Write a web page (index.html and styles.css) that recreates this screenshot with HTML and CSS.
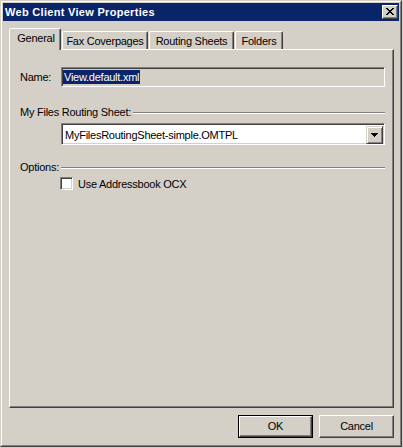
FILE: index.html
```html
<!DOCTYPE html>
<html>
<head>
<meta charset="utf-8">
<link rel="stylesheet" href="styles.css">
</head>
<body>
<div class="window">
  <div class="frame">
    <div class="titlebar">
      <span class="title">Web Client View Properties</span>
      <span class="close">
        <svg width="8" height="7" viewBox="0 0 8 7" shape-rendering="crispEdges"><path d="M0 0h2v1H0zM6 0h2v1H6zM1 1h2v1H1zM5 1h2v1H5zM2 2h4v1H2zM3 3h2v1H3zM2 4h4v1H2zM1 5h2v1H1zM5 5h2v1H5zM0 6h2v1H0zM6 6h2v1H6z" fill="#000"/></svg>
      </span>
    </div>
    <div class="body">
      <div class="tabs">
        <div class="tab active w-general">General</div>
        <div class="tab w-fax">Fax Coverpages</div>
        <div class="tab w-routing">Routing Sheets</div>
        <div class="tab w-folders">Folders</div>
      </div>
      <div class="panel">
        <div class="name-row">
          <span class="label">Name:</span>
          <div class="input"><span class="sel">View.default.xml</span></div>
        </div>
        <div class="group g1"><span class="glabel">My Files Routing Sheet:</span><span class="line"></span></div>
        <div class="combo">
          <span class="val">MyFilesRoutingSheet-simple.OMTPL</span>
          <span class="dd"><svg width="7" height="4" viewBox="0 0 7 4" shape-rendering="crispEdges"><path d="M0 0h7v1H0zM1 1h5v1H1zM2 2h3v1H2zM3 3h1v1H3z" fill="#000"/></svg></span>
        </div>
        <div class="group g2"><span class="glabel">Options:</span><span class="line"></span></div>
        <div class="check"><span class="box"></span><span class="clabel">Use Addressbook OCX</span></div>
      </div>
      <div class="buttons">
        <div class="btn default"><span class="btn-in">OK</span></div>
        <div class="btn"><span class="btn-in">Cancel</span></div>
      </div>
    </div>
  </div>
</div>
</body>
</html>
```
FILE: styles.css
```css
* { box-sizing: border-box; }
html, body { margin: 0; padding: 0; }
body {
  background: #d4d0c8;
  font-family: "Liberation Sans", Arial, sans-serif;
  font-size: 11px;
  letter-spacing: -0.25px;
  color: #000;
  width: 403px;
  height: 448px;
  overflow: hidden;
}
.window {
  width: 402px;
  height: 447px;
  border: 1px solid;
  border-color: #d4d0c8 #404040 #404040 #d4d0c8;
  background: #d4d0c8;
}
.frame {
  height: 100%;
  border: 1px solid;
  border-color: #ffffff #808080 #808080 #ffffff;
  padding: 1px;
  display: flex;
  flex-direction: column;
}
.titlebar {
  height: 18px;
  background: #0a246a;
  color: #fff;
  display: flex;
  align-items: center;
  justify-content: space-between;
  padding: 0 1px 0 2px;
}
.title {
  font-weight: bold;
  font-size: 11px;
  letter-spacing: 0.3px;
}
.close {
  width: 16px;
  height: 14px;
  background: #d4d0c8;
  border: 1px solid;
  border-color: #ffffff #404040 #404040 #ffffff;
  box-shadow: inset -1px -1px 0 #808080;
  display: flex;
  align-items: center;
  justify-content: center;
  padding: 0 1px 1px 0;
}
.close svg { display: block; }
.body {
  flex: 1;
  padding: 7px 5px 0 6px;
  display: flex;
  flex-direction: column;
}
.tabs {
  height: 21px;
  display: flex;
  align-items: flex-end;
  position: relative;
  z-index: 2;
}
.tab {
  height: 18px;
  border-top: 1px solid #fff;
  border-left: 1px solid #fff;
  border-right: 1px solid #404040;
  box-shadow: inset -1px 0 0 #808080;
  border-radius: 2px 2px 0 0;
  margin-left: 1px;
  text-align: center;
  line-height: 16px;
  padding-top: 1px;
  background: #d4d0c8;
}
.tab.active {
  height: 22px;
  margin-left: 0;
  margin-bottom: -1px;
  line-height: 16px;
  padding-top: 1px;
  padding-left: 2px;
}
.w-general { width: 52px; }
.w-fax { width: 86px; }
.w-routing { width: 85px; }
.w-folders { width: 48px; }
.panel {
  height: 359px;
  border: 1px solid;
  border-color: #ffffff #404040 #404040 #ffffff;
  box-shadow: inset -1px -1px 0 #808080;
  padding: 17px 8px 0 10px;
  position: relative;
  z-index: 1;
}
.name-row {
  display: flex;
  align-items: center;
  height: 20px;
}
.label { width: 41px; }
.input {
  flex: 1;
  height: 20px;
  border: 1px solid;
  border-color: #808080 #ffffff #ffffff #808080;
  box-shadow: inset 1px 1px 0 #404040, inset -1px -1px 0 #d4d0c8;
  padding: 2px 0 0 1px;
}
.sel {
  display: inline-block;
  background: #0a246a;
  color: #fff;
  line-height: 14px;
  height: 14px;
  padding: 0 1px;
}
.group {
  display: flex;
  align-items: center;
  height: 13px;
  line-height: 13px;
}
.g1 { margin-top: 19px; }
.g2 { margin-top: 16px; }
.glabel { padding-right: 2px; }
.line {
  flex: 1;
  height: 2px;
  border-top: 1px solid #808080;
  border-bottom: 1px solid #ffffff;
}
.combo {
  margin: 4px 0 0 41px;
  height: 22px;
  border: 1px solid;
  border-color: #808080 #ffffff #ffffff #808080;
  box-shadow: inset 1px 1px 0 #404040, inset -1px -1px 0 #d4d0c8;
  background: #fff;
  padding: 2px 1px 1px 2px;
  display: flex;
  align-items: stretch;
}
.val {
  flex: 1;
  line-height: 18px;
  padding-left: 1px;
}
.dd {
  width: 17px;
  height: 18px;
  background: #d4d0c8;
  border: 1px solid;
  border-color: #d4d0c8 #404040 #404040 #d4d0c8;
  box-shadow: inset 1px 1px 0 #ffffff, inset -1px -1px 0 #808080;
  display: flex;
  align-items: center;
  justify-content: center;
}
.dd svg { display: block; }
.check {
  margin: 3px 0 0 40px;
  display: flex;
  align-items: center;
  height: 13px;
}
.box {
  width: 13px;
  height: 13px;
  background: #fff;
  border: 1px solid;
  border-color: #808080 #ffffff #ffffff #808080;
  box-shadow: inset 1px 1px 0 #404040, inset -1px -1px 0 #d4d0c8;
  margin-right: 5px;
}
.buttons {
  display: flex;
  justify-content: flex-end;
  gap: 6px;
  margin-top: 7px;
}
.btn {
  width: 75px;
  height: 23px;
  border: 1px solid;
  border-color: #ffffff #404040 #404040 #ffffff;
  box-shadow: inset -1px -1px 0 #808080;
  display: flex;
  align-items: center;
  justify-content: center;
}
.btn.default {
  border: 1px solid #000;
  box-shadow: none;
  padding: 0;
}
.btn.default .btn-in {
  width: 100%;
  height: 100%;
  border: 1px solid;
  border-color: #ffffff #404040 #404040 #ffffff;
  box-shadow: inset -1px -1px 0 #808080;
  display: flex;
  align-items: center;
  justify-content: center;
}
.btn-in { line-height: 13px; }
```
